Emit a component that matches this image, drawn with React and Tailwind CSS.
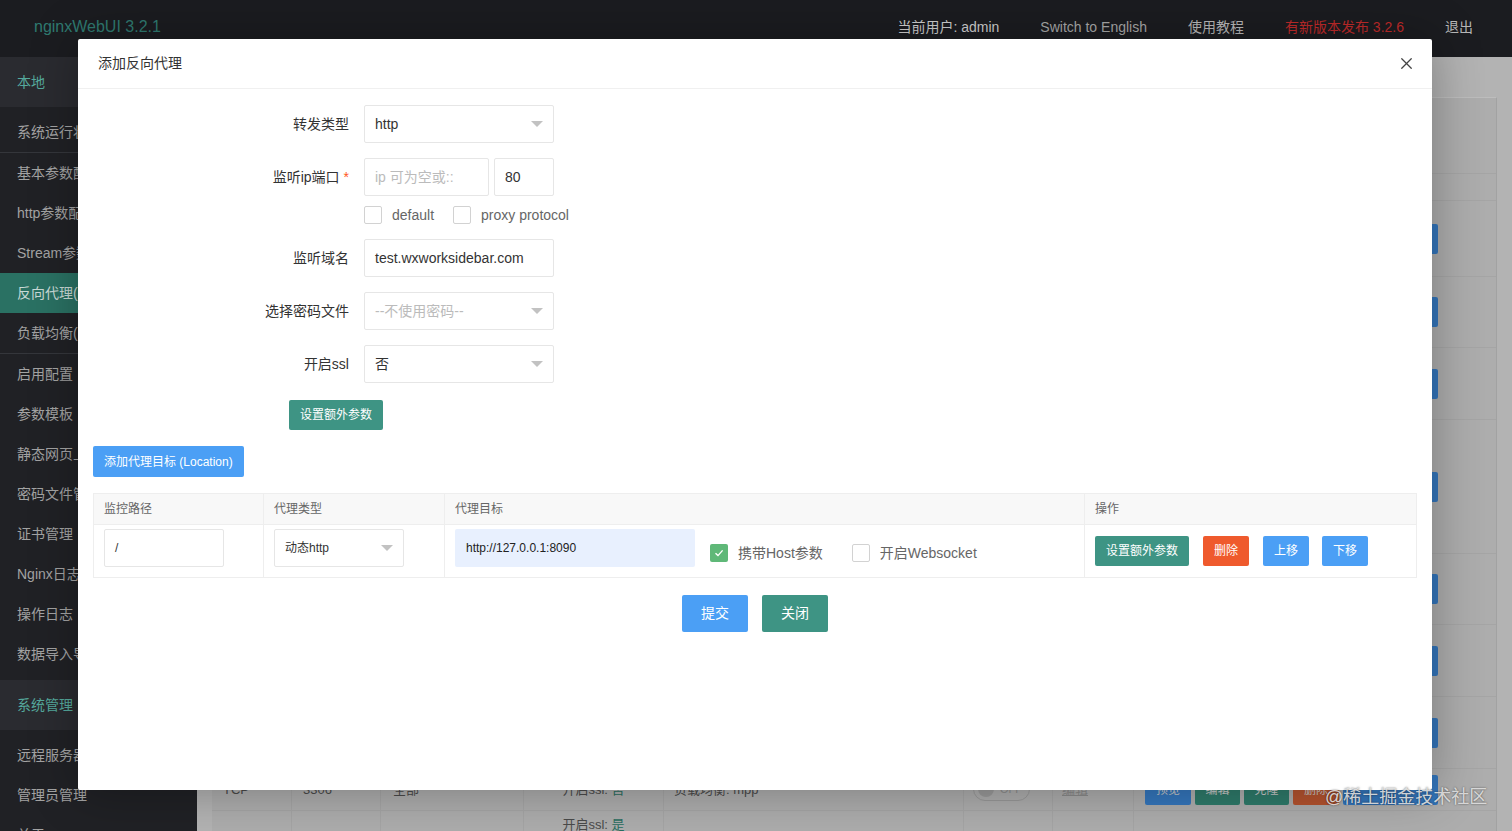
import { X } from 'lucide-react';

const font = "font-['Liberation_Sans','Noto_Sans_CJK_SC',sans-serif]";

const navTop = ['系统运行状态', '基本参数配置', 'http参数配置', 'Stream参数配置', '反向代理(Server)', '负载均衡(Upstream)', '启用配置', '参数模板', '静态网页上传', '密码文件管理', '证书管理', 'Nginx日志', '操作日志', '数据导入导出'];
const navSys = ['远程服务器', '管理员管理', '关于'];

// rows of the page behind the dialog (only the edges show)
const bgRows = [76, 71, 72, 134, 71, 72, 72];
const bgCols = 'grid grid-cols-[80px_89px_143px_140px_300px_89px_81px_362px]';

function Triangle() {
  return <span className="w-0 h-0 border-x-[6px] border-x-transparent border-t-[6px] border-t-[#c2c2c2]" />;
}

function Select({ value, placeholder, width = 'w-[190px]', small }) {
  return (
    <div className={`${width} h-[38px] border border-[#e6e6e6] rounded-[2px] bg-white flex items-center justify-between pl-[10px] pr-[10px] ${small ? 'text-[12px]' : 'text-[14px]'}`}>
      <span className={value ? 'text-[#333]' : 'text-[#bbb]'}>{value || placeholder}</span>
      <Triangle />
    </div>
  );
}

function Input({ value, placeholder, width = 'w-[190px]', className = '' }) {
  return (
    <div className={`${width} h-[38px] border border-[#e6e6e6] rounded-[2px] bg-white flex items-center pl-[10px] text-[14px] ${className}`}>
      <span className={value ? 'text-[#333]' : 'text-[#bbb]'}>{value || placeholder}</span>
    </div>
  );
}

function Check({ checked, label, className = '' }) {
  return (
    <div className={`flex items-center h-[18px] ${className}`}>
      {checked ? (
        <span className="w-[18px] h-[18px] rounded-[2px] bg-[#5fb878] flex items-center justify-center">
          <svg width="12" height="12" viewBox="0 0 12 12" fill="none" stroke="white" strokeWidth="1.4">
            <path d="M2.5 6.2 L5 8.6 L9.6 3.4" />
          </svg>
        </span>
      ) : (
        <span className="w-[18px] h-[18px] rounded-[2px] border border-[#d2d2d2] bg-white" />
      )}
      <span className="ml-[10px] text-[14px] leading-[18px] text-[#666]">{label}</span>
    </div>
  );
}

function FormRow({ label, required, children, className = '' }) {
  return (
    <div className={`flex items-center ${className}`}>
      <div className="w-[286px] pr-[15px] text-right text-[14px] text-[#333]">
        {label}
        {required && <span className="text-[#ff5722] ml-[4px]">*</span>}
      </div>
      {children}
    </div>
  );
}

export default function App() {
  return (
    <div className={`relative w-[1512px] h-[831px] overflow-hidden bg-[#b3b3b3] ${font}`}>
      {/* Header */}
      <header className="h-[57px] bg-[#1b1c20] flex items-center justify-between pb-[3px]">
        <div className="pl-[34px] text-[16px] text-[#2f7a70]">nginxWebUI 3.2.1</div>
        <nav className="flex items-center gap-[41px] pr-[39px] text-[14px]">
          <span className="text-[#cfcfcf]">当前用户: admin</span>
          <span className="text-[#a8a8a8]">Switch to English</span>
          <span className="text-[#b8b8b8]">使用教程</span>
          <span className="text-[#c02a2a]">有新版本发布 3.2.6</span>
          <span className="text-[#b8b8b8]">退出</span>
        </nav>
      </header>

      <div className="flex h-[774px]">
        {/* Sidebar */}
        <aside className="w-[197px] bg-[#202125] text-[14px] shrink-0">
          <div className="h-[50px] bg-[#2a2b30] flex items-center pl-[17px] text-[#55a99d]">本地</div>
          <div className="pt-[5px] pb-[6px]">
            {navTop.map((t, i) => (
              <div
                key={t}
                className={`flex items-center pl-[17px] whitespace-nowrap ${i === 4 ? 'bg-[#2a7163] text-[#c9d9d6]' : 'text-[#a3a3a3]'} ${i === 0 || i === 5 ? 'h-[41px] border-b border-[#34363b]' : 'h-[40px]'}`}
              >
                {t}
              </div>
            ))}
          </div>
          <div className="h-[50px] bg-[#2a2b30] flex items-center pl-[17px] text-[#55a99d]">系统管理</div>
          <div className="py-[5px]">
            {navSys.map((t) => (
              <div key={t} className="h-[40px] flex items-center pl-[17px] text-[#a3a3a3]">{t}</div>
            ))}
          </div>
        </aside>

        {/* Page behind the dialog */}
        <main className="flex-1 pt-[40px] px-[15px] text-[13px] text-[#4a4a4a]">
          <div className="bg-[#adadad] border-t border-[#bdbdbd] border-r border-r-[#a2a2a2] h-full">
            <div className="h-[76px] border-b border-[#a5a5a5]" />
            <div className="h-[27px] border-b border-[#a5a5a5]" />
            {bgRows.map((h, i) => (
              <div key={i} style={{ height: h }} className={`${bgCols} border-b border-[#a5a5a5]`}>
                <div className="col-span-7" />
                <div className="flex items-center pl-[11px] gap-[4px]">
                  <span className="w-[46px] h-[30px] rounded-[2px] bg-[#3476bc]" />
                  <span className="w-[45px] h-[30px] rounded-[2px] bg-[#2e7a6a]" />
                  <span className="w-[45px] h-[30px] rounded-[2px] bg-[#2e7a6a]" />
                  <span className="w-[46px] h-[30px] rounded-[2px] bg-[#b4532f]" />
                  <span className="w-[95px] h-[30px] rounded-[2px] bg-[#3476bc]" />
                </div>
              </div>
            ))}
            <div className={`h-[42px] ${bgCols} border-b border-[#a5a5a5]`}>
              <div className="pl-[11px] pt-[11px] border-r border-[#a5a5a5]">TCP</div>
              <div className="pl-[11px] pt-[11px] border-r border-[#a5a5a5]">3306</div>
              <div className="pl-[12px] pt-[11px] border-r border-[#a5a5a5]">全部</div>
              <div className="text-center pt-[11px] border-r border-[#a5a5a5]">开启ssl: <span className="text-[#2a6e5f]">否</span></div>
              <div className="pl-[10px] pt-[11px] border-r border-[#a5a5a5]">负载均衡: mpp</div>
              <div className="pl-[9px] pt-[8px] border-r border-[#a5a5a5]">
                <span className="w-[57px] h-[24px] rounded-full border border-[#999] flex items-center pl-[4px] gap-[6px] text-[11px] text-[#8a8a8a]">
                  <span className="w-[16px] h-[16px] rounded-full bg-[#9a9a9a]" />OFF
                </span>
              </div>
              <div className="pl-[9px] pt-[11px] border-r border-[#a5a5a5] text-[#8a8a8a] underline">编辑</div>
              <div className="flex items-center pl-[11px] gap-[4px] text-[12px] text-[#c8c8c8]">
                <span className="w-[46px] h-[30px] rounded-[2px] bg-[#3476bc] flex items-center justify-center">预览</span>
                <span className="w-[45px] h-[30px] rounded-[2px] bg-[#2e7a6a] flex items-center justify-center">编辑</span>
                <span className="w-[45px] h-[30px] rounded-[2px] bg-[#2e7a6a] flex items-center justify-center">克隆</span>
                <span className="w-[46px] h-[30px] rounded-[2px] bg-[#b4532f] flex items-center justify-center">删除</span>
                <span className="w-[95px] h-[30px] rounded-[2px] bg-[#3476bc]" />
              </div>
            </div>
            <div className={`h-[70px] ${bgCols}`}>
              <div className="border-r border-[#a5a5a5]" />
              <div className="border-r border-[#a5a5a5]" />
              <div className="border-r border-[#a5a5a5]" />
              <div className="text-center pt-[4px] border-r border-[#a5a5a5]">开启ssl: <span className="text-[#2a6e5f]">是</span></div>
              <div className="border-r border-[#a5a5a5]" />
              <div className="border-r border-[#a5a5a5]" />
              <div className="border-r border-[#a5a5a5]" />
              <div />
            </div>
          </div>
        </main>
      </div>

      {/* Dialog */}
      <div className="absolute left-[78px] top-[39px] w-[1354px] h-[751px] bg-white rounded-[2px] shadow-[1px_1px_50px_rgba(0,0,0,0.3)]">
        <div className="h-[50px] border-b border-[#f0f0f0] flex items-center justify-between pl-[20px] pr-[16px]">
          <span className="text-[14px] text-[#333]">添加反向代理</span>
          <X size={19} strokeWidth={1.6} className="text-[#444]" />
        </div>

        <div className="pt-[16px]">
          <FormRow label="转发类型">
            <Select value="http" />
          </FormRow>
          <FormRow label="监听ip端口" required className="mt-[15px]">
            <Input placeholder="ip 可为空或::" width="w-[125px]" />
            <Input value="80" width="w-[60px]" className="ml-[5px]" />
          </FormRow>
          <div className="flex items-center h-[18px] mt-[10px] pl-[286px]">
            <Check label="default" />
            <Check label="proxy protocol" className="ml-[19px]" />
          </div>
          <FormRow label="监听域名" className="mt-[15px]">
            <Input value="test.wxworksidebar.com" />
          </FormRow>
          <FormRow label="选择密码文件" className="mt-[15px]">
            <Select placeholder="--不使用密码--" />
          </FormRow>
          <FormRow label="开启ssl" className="mt-[15px]">
            <Select value="否" />
          </FormRow>
          <div className="mt-[17px] pl-[211px]">
            <button className="h-[30px] px-[11px] rounded-[2px] bg-[#3e9484] text-white text-[12px]">设置额外参数</button>
          </div>
        </div>

        <div className="px-[15px] mt-[16px]">
          <button className="h-[31px] px-[11px] rounded-[2px] bg-[#4b9ff5] text-white text-[12px]">添加代理目标 (Location)</button>

          <div className="mt-[16px] border border-[#eee]">
            <div className="grid grid-cols-[170px_181px_640px_331px] h-[31px] bg-[#f8f8f8] border-b border-[#eee] text-[12px] text-[#666]">
              <div className="flex items-center pl-[10px] border-r border-[#eee]">监控路径</div>
              <div className="flex items-center pl-[10px] border-r border-[#eee]">代理类型</div>
              <div className="flex items-center pl-[10px] border-r border-[#eee]">代理目标</div>
              <div className="flex items-center pl-[10px]">操作</div>
            </div>
            <div className="grid grid-cols-[170px_181px_640px_331px] h-[52px]">
              <div className="pl-[10px] pt-[4px] border-r border-[#eee]">
                <Input value="/" width="w-[120px]" className="!text-[12px]" />
              </div>
              <div className="pl-[10px] pt-[4px] border-r border-[#eee]">
                <Select value="动态http" width="w-[130px]" small />
              </div>
              <div className="pl-[10px] pt-[4px] border-r border-[#eee] flex items-start">
                <div className="w-[240px] h-[38px] rounded-[2px] bg-[#e8f0fe] flex items-center pl-[11px] text-[12px] text-[#222]">http://127.0.0.1:8090</div>
                <Check checked label="携带Host参数" className="ml-[15px] mt-[15px]" />
                <Check label="开启Websocket" className="ml-[29px] mt-[15px]" />
              </div>
              <div className="pl-[10px] flex items-center text-[12px] text-white">
                <button className="h-[30px] w-[94px] rounded-[2px] bg-[#3e9484]">设置额外参数</button>
                <button className="h-[30px] w-[46px] ml-[14px] rounded-[2px] bg-[#ef5a2d]">删除</button>
                <button className="h-[30px] w-[46px] ml-[14px] rounded-[2px] bg-[#4b9ff5]">上移</button>
                <button className="h-[30px] w-[46px] ml-[13px] rounded-[2px] bg-[#4b9ff5]">下移</button>
              </div>
            </div>
          </div>

          <div className="mt-[17px] flex justify-center gap-[14px]">
            <button className="h-[37px] w-[66px] rounded-[2px] bg-[#4b9ff5] text-white text-[14px]">提交</button>
            <button className="h-[37px] w-[66px] rounded-[2px] bg-[#3e9484] text-white text-[14px]">关闭</button>
          </div>
        </div>
      </div>

      {/* Watermark */}
      <div className="absolute left-[1325px] top-[785px] text-[18px] leading-[24px] text-[#e6e6e6]/90 [text-shadow:0_0_2px_rgba(0,0,0,0.6)] whitespace-nowrap">
        @稀土掘金技术社区
      </div>
    </div>
  );
}
